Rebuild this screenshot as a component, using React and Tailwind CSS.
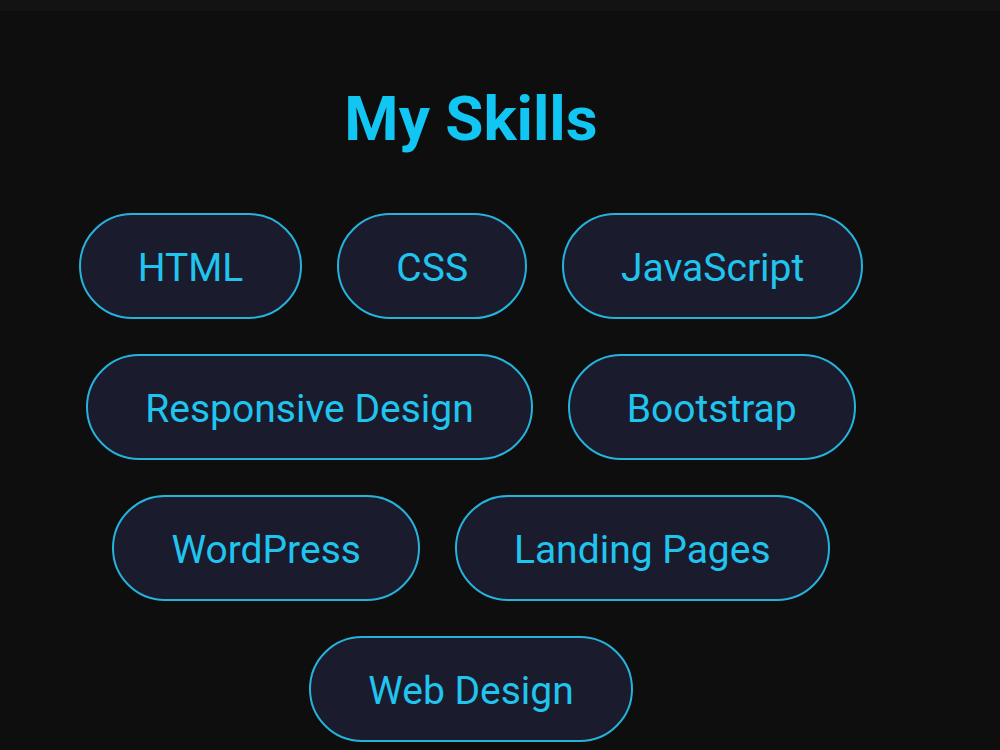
const skills = [
  'HTML',
  'CSS',
  'JavaScript',
  'Responsive Design',
  'Bootstrap',
  'WordPress',
  'Landing Pages',
  'Web Design',
];

export default function App() {
  return (
    <div className="min-h-[750px] bg-[#0e0e0e] font-['Roboto',sans-serif]">
      <div className="h-[11px] bg-[#131313]" />
      <section className="w-[942px] pt-[77px]">
        <h2 className="text-center text-[62px] font-bold leading-none text-[#12c6f3]">My Skills</h2>
        <div className="mt-[63px] flex flex-wrap justify-center gap-[35px]">
          {skills.map((s) => (
            <span
              key={s}
              className="flex h-[106px] items-center rounded-full border-2 border-[#25b3dc] bg-[#1b1b2e] px-[57px] pt-[4px] text-[39px] text-[#20c5ef]"
            >
              {s}
            </span>
          ))}
        </div>
      </section>
    </div>
  );
}
